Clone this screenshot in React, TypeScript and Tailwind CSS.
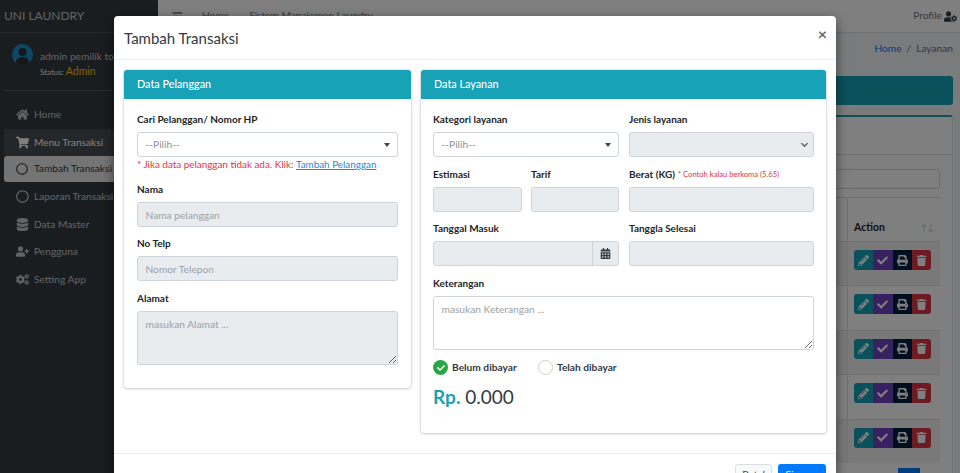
import React from "react";
import { FaHome, FaShoppingCart, FaRegCircle, FaDatabase, FaUserPlus, FaCogs, FaUserCog, FaPencilAlt, FaCheck, FaPrint, FaTrash, FaCalendarAlt, FaBars } from "react-icons/fa";

const font = { fontFamily: 'Lato, "Noto Sans", sans-serif' };

function NavItem({ icon, label, cls = "" }: { icon: React.ReactNode; label: string; cls?: string }) {
  return (
    <div className={`mx-[4px] h-[27.5px] flex items-center rounded-[3px] pl-[11px] text-[10.2px] whitespace-nowrap ${cls}`}>
      <span className="w-[14px] flex justify-center text-[13px] mr-[5px]">{icon}</span>
      {label}
    </div>
  );
}

function Sidebar() {
  return (
    <aside className="w-[158px] shrink-0 bg-[#343a40] text-[#c2c7d0] flex flex-col overflow-hidden">
      <div className="h-[33px] flex items-center pl-[4px] text-[12px] border-b border-[#4b545c]">UNI LAUNDRY</div>
      <div className="mx-[4px] h-[58px] flex items-start gap-[7px] pl-[8px] pt-[11px] border-b border-[#4f5962]">
        <div className="w-[21px] h-[21px] rounded-full bg-[#1f8fc4] overflow-hidden flex items-end justify-center shrink-0">
          <svg viewBox="0 0 21 21" className="w-[21px] h-[21px]"><circle cx="10.5" cy="8" r="4" fill="#2b3034" /><path d="M3.5 21c0-6 3-8 7-8s7 2 7 8z" fill="#2b3034" /></svg>
        </div>
        <div className="whitespace-nowrap pt-[5px]">
          <div className="text-[10.2px] leading-[14px]">admin pemilik toko</div>
          <div className="text-[8px] leading-[16px] text-[#e8e8e8]">Status: <span className="text-[10.5px] text-[#ffc107]">Admin</span></div>
        </div>
      </div>
      <div className="pt-[10px]">
        <NavItem icon={<FaHome />} label="Home" />
        <NavItem icon={<FaShoppingCart />} label="Menu Transaksi" cls="bg-white/10 text-white" />
        <div className="h-[26px] mx-[4px] flex items-center rounded-[3px] pl-[11px] bg-[#e9e9e9] text-[#343a40] text-[10.2px] whitespace-nowrap">
          <span className="w-[14px] flex justify-center text-[12px] mr-[5px]"><FaRegCircle /></span>Tambah Transaksi
        </div>
        <NavItem icon={<FaRegCircle />} label="Laporan Transaksi" cls="mt-[1px]" />
        <NavItem icon={<FaDatabase />} label="Data Master" />
        <NavItem icon={<FaUserPlus />} label="Pengguna" />
        <NavItem icon={<FaCogs />} label="Setting App" />
      </div>
    </aside>
  );
}

function ActionRow({ striped }: { striped: boolean }) {
  return (
    <div className={`h-[44.4px] shrink-0 flex ${striped ? "bg-black/5" : ""} border-t border-[#dee2e6]`}>
      <div className="flex-1 border-r border-[#dee2e6]" />
      <div className="w-[92px] pl-[6px] pt-[8px]">
        <div className="flex w-[77px] h-[20px] rounded-[3px] overflow-hidden text-white text-[11px]">
          <span className="flex-1 bg-[#17a2b8] flex items-center justify-center"><FaPencilAlt /></span>
          <span className="flex-1 bg-[#6f42c1] flex items-center justify-center"><FaCheck /></span>
          <span className="flex-1 bg-[#001f3f] flex items-center justify-center"><FaPrint /></span>
          <span className="flex-1 bg-[#dc3545] flex items-center justify-center"><FaTrash /></span>
        </div>
      </div>
    </div>
  );
}

function Background() {
  return (
    <main className="flex-1 min-w-0 flex flex-col bg-[#f4f6f9] text-[#212529]">
      <header className="h-[33px] shrink-0 bg-white border-b border-[#dee2e6] flex items-center pl-[14px] pr-[3px] text-[10.2px] text-[#6c757d]">
        <FaBars className="text-[11px] mr-[19px]" />
        <span className="mr-[20px]">Home</span>
        <span>Sistem Manajemen Laundry</span>
        <span className="ml-auto mr-[2px]">Profile</span>
        <FaUserCog className="text-[13px] text-[#343a40]" />
      </header>
      <div className="h-[30px] mt-[1px] shrink-0 flex items-center justify-end pr-[7px] text-[10.2px]">
        <span className="text-[#007bff]">Home</span><span className="mx-[5px] text-[#6c757d]">/</span><span className="text-[#6c757d]">Layanan</span>
      </div>
      <div className="h-[29px] mt-[12px] mr-[7px] ml-[12px] shrink-0 bg-[#17a2b8] rounded-[3px]" />
      <div className="mt-[10px] mr-[7px] ml-[12px] flex-1 bg-white border-t-2 border-[#17a2b8] border-x border-x-[#dee2e6] rounded-t-[3px] flex flex-col overflow-hidden">
        <div className="h-[38px] shrink-0 border-b border-[#dee2e6]" />
        <div className="px-[12px] flex flex-col flex-1 min-h-0">
          <div className="h-[20px] mt-[14px] shrink-0 flex justify-end">
            <div className="w-[240px] h-[20px] border border-[#ced4da] rounded-[3px]" />
          </div>
          <div className="h-[44px] mt-[8px] shrink-0 border-t border-[#dee2e6] flex">
            <div className="flex-1 border-r border-[#dee2e6]" />
            <div className="w-[92px] pl-[6px] pr-[6px] pt-[16px] flex items-center justify-between text-[10.5px] font-bold">
              Action <span className="text-[#c2c7d0] font-normal text-[9px]">↑↓</span>
            </div>
          </div>
          <ActionRow striped />
          <ActionRow striped={false} />
          <ActionRow striped />
          <ActionRow striped={false} />
          <ActionRow striped />
          <div className="mt-[5px] flex justify-end pr-[20px]">
            <div className="w-[22px] h-[20px] bg-[#007bff]" />
          </div>
        </div>
      </div>
    </main>
  );
}

const inputBase = "block w-full h-[25px] rounded-[3px] border border-[#ced4da] px-[7.5px] text-[10.2px] text-[#495057] placeholder:text-[#9ba1a7] outline-none";
const disabled = "bg-[#e9ecef]";

function Label({ children }: { children: React.ReactNode }) {
  return <div className="h-[18px] mb-[4px] pt-[1px] flex items-center text-[10px] font-bold text-[#212529] whitespace-nowrap">{children}</div>;
}

function Pilih() {
  return (
    <div className={`${inputBase} bg-white flex items-center justify-between !text-[#8b9197]`}>
      --Pilih--
      <span className="w-0 h-0 border-x-[3px] border-x-transparent border-t-[4px] border-t-[#444]" />
    </div>
  );
}

function CardHead({ title }: { title: string }) {
  return <div className="h-[29px] bg-[#17a2b8] text-white text-[10.8px] font-medium flex items-center px-[13px] rounded-t-[3px]">{title}</div>;
}

function Modal() {
  return (
    <div className="absolute left-[114px] top-[16px] w-[722px] h-[500px] bg-white rounded-[4px] shadow-[0_4px_12px_rgba(0,0,0,0.5)] text-[#212529]">
      <div className="h-[44px] border-b border-[#e9ecef] flex items-center justify-between pl-[10px] pr-[9px]">
        <span className="text-[15px] pt-[1px] text-[#343a40]">Tambah Transaksi</span>
        <span className="text-[16px] font-bold text-[#666] mb-[7px]">×</span>
      </div>
      <div className="px-[10px] pt-[10px] flex gap-[10px] items-start">
        <section className="w-[287px] shrink-0 h-[318px] bg-white rounded-[3px] shadow-[0_0_2px_rgba(0,0,0,0.25),0_1px_3px_rgba(0,0,0,0.15)]">
          <CardHead title="Data Pelanggan" />
          <div className="px-[13px] pt-[11px]">
            <Label>Cari Pelanggan/ Nomor HP</Label>
            <Pilih />
            <div className="h-[15px] mb-[8px] flex items-center text-[9.9px] text-[#dc3545] whitespace-nowrap">
              *&nbsp;Jika data pelanggan tidak ada. Klik:&nbsp;<span className="text-[#1c8ad6] underline">Tambah Pelanggan</span>
            </div>
            <Label>Nama</Label>
            <input disabled placeholder="Nama pelanggan" className={`${inputBase} ${disabled} mb-[7px]`} />
            <Label>No Telp</Label>
            <input disabled placeholder="Nomor Telepon" className={`${inputBase} ${disabled} mb-[8px]`} />
            <Label>Alamat</Label>
            <textarea disabled placeholder="masukan Alamat ..." className={`${inputBase} ${disabled} !h-[54px] py-[5px]`} />
          </div>
        </section>
        <section className="flex-1 min-w-0 h-[363px] bg-white rounded-[3px] shadow-[0_0_2px_rgba(0,0,0,0.25),0_1px_3px_rgba(0,0,0,0.15)]">
          <CardHead title="Data Layanan" />
          <div className="px-[12px] pt-[11px]">
            <div className="grid grid-cols-[186px_185px] gap-x-[10px]">
              <div className="mb-[8px]"><Label>Kategori layanan</Label><Pilih /></div>
              <div className="mb-[8px]"><Label>Jenis layanan</Label>
                <div className={`${inputBase} ${disabled} flex items-center justify-end pr-[4px]`}>
                  <svg viewBox="0 0 10 10" className="w-[9px] h-[9px]" fill="none" stroke="#555" strokeWidth="1.4"><path d="M1.5 3.5 5 7l3.5-3.5" /></svg>
                </div>
              </div>
              <div className="mb-[7px] grid grid-cols-[89px_88px] gap-x-[9px]">
                <div><Label>Estimasi</Label><input disabled className={`${inputBase} ${disabled}`} /></div>
                <div><Label>Tarif</Label><input disabled className={`${inputBase} ${disabled}`} /></div>
              </div>
              <div className="mb-[7px]">
                <Label>Berat (KG)<span className="ml-[3px] text-[7.6px] font-normal text-[#dc3545]">* Contoh kalau berkoma (5.65)</span></Label>
                <input disabled className={`${inputBase} ${disabled}`} />
              </div>
              <div className="mb-[8px]"><Label>Tanggal Masuk</Label>
                <div className="flex h-[25px] rounded-[3px] border border-[#ced4da] bg-[#e9ecef]">
                  <div className="flex-1 border-r border-[#ced4da]" />
                  <div className="w-[25px] flex items-center justify-center text-[11px] text-[#343a40]"><FaCalendarAlt /></div>
                </div>
              </div>
              <div className="mb-[8px]"><Label>Tanggla Selesai</Label><input disabled className={`${inputBase} ${disabled}`} /></div>
            </div>
            <Label>Keterangan</Label>
            <textarea placeholder="masukan Keterangan ..." className={`${inputBase} !h-[54px] py-[5px]`} />
            <div className="mt-[10px] h-[15px] flex items-center text-[10.2px] font-bold text-[#343a40]">
              <span className="w-[15px] h-[15px] rounded-full bg-[#28a745] flex items-center justify-center text-white text-[8px] mr-[4px]"><FaCheck /></span>
              <span className="w-[86px]">Belum dibayar</span>
              <span className="w-[15px] h-[15px] rounded-full bg-white border border-[#d3cfc8] mr-[4px]" />
              <span>Telah dibayar</span>
            </div>
            <div className="mt-[9px] text-[19px] leading-[26px] text-[#343a40] whitespace-nowrap">
              <span className="font-bold text-[#17a2b8]">Rp.</span> 0.000
            </div>
          </div>
        </section>
      </div>
      <div className="mt-[20px] border-t border-[#e9ecef] flex justify-end gap-[6px] pr-[10px] pt-[10px]">
        <button className="w-[37px] h-[25px] pb-[3px] bg-[#f8f9fa] border border-[#ddd] rounded-[3px] text-[10.2px] text-[#444]">Batal</button>
        <button className="w-[48px] h-[25px] pb-[3px] bg-[#007bff] rounded-[3px] text-[10.2px] text-white">Simpan</button>
      </div>
    </div>
  );
}

export default function App() {
  return (
    <div className="relative w-[960px] h-[473px] overflow-hidden flex bg-white" style={font}>
      <Sidebar />
      <Background />
      <div className="absolute inset-0 bg-black/50" />
      <Modal />
    </div>
  );
}
